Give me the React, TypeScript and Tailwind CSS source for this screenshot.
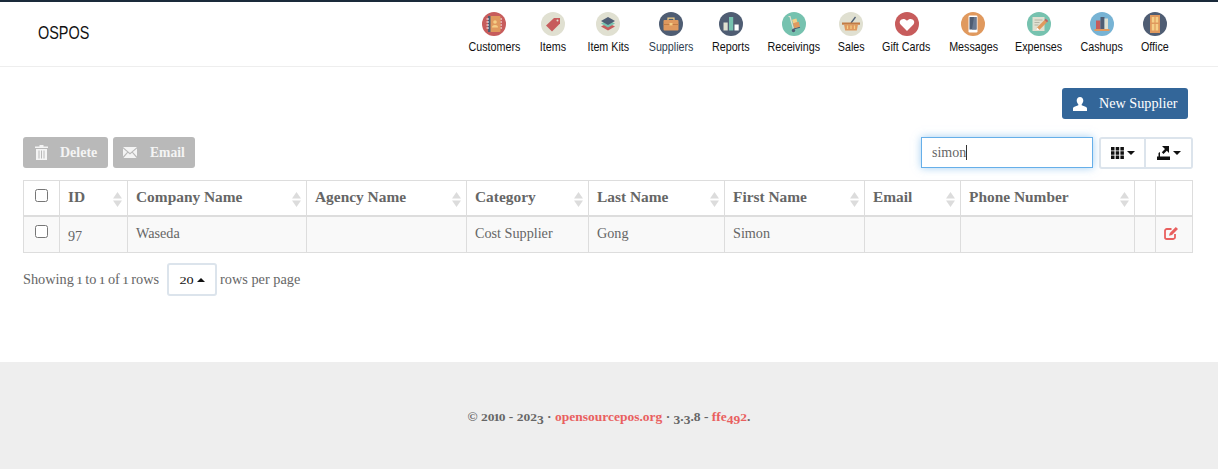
const serif = "font-['Liberation_Serif',Georgia,serif]";

// the reference font has old-style figures, Liberation does not
function Old({ children }: { children: string }) {
  return (
    <>
      {children.split("").map((ch, i) => {
        if (ch === "1") return <span key={i} className="inline-block mx-[-0.1em] scale-y-[0.75] origin-[50%_80%] leading-none">{ch}</span>;
        if ("02".includes(ch)) return <span key={i} className="inline-block scale-y-[0.75] origin-[50%_80%] leading-none">{ch}</span>;
        if ("34579".includes(ch)) return <span key={i} className="inline-block translate-y-[0.2em] leading-none">{ch}</span>;
        return <span key={i}>{ch}</span>;
      })}
    </>
  );
}

function Disc({ bg, children }: { bg: string; children: React.ReactNode }) {
  return (
    <svg width="24" height="24" viewBox="0 0 24 24" className="block">
      <circle cx="12" cy="12" r="12" fill={bg} />
      {children}
    </svg>
  );
}

const navItems: { label: string; w: number; icon: React.ReactNode; muted?: boolean }[] = [
  {
    label: "Customers",
    w: 52,
    icon: (
      <Disc bg="#c75c5c">
        <rect x="6" y="4" width="12.5" height="16" rx="1" fill="#e0995e" />
        <rect x="6" y="4" width="2.5" height="16" fill="#4f5d73" />
        <circle cx="13" cy="10" r="1.8" fill="#f5cf87" />
        <path d="M10 15.500c0-3.200 6-3.200 6 0z" fill="#f5cf87" />
        <path d="M18.500 7h1.500M18.500 10h1.500M18.500 13h1.500M18.500 16h1.500M4.500 7h2.500M4.500 10h2.500M4.500 13h2.500M4.500 16h2.500" stroke="#fff" strokeWidth="1" />
      </Disc>
    ),
  },
  {
    label: "Items",
    w: 27,
    icon: (
      <Disc bg="#e0e0d1">
        <path d="M5 13.500 13 6h6v5.500l-8 8z" fill="#c75c5c" />
        <circle cx="16.500" cy="8.500" r="1" fill="#e0e0d1" />
      </Disc>
    ),
  },
  {
    label: "Item Kits",
    w: 43,
    icon: (
      <Disc bg="#e0e0d1">
        <path d="M5 14.500 12 11l7 3.500-7 4z" fill="#c75c5c" />
        <path d="M5 11.500 12 8l7 3.500-7 4z" fill="#76c2af" />
        <path d="M5 9 12 5l7 4-7 4z" fill="#4f5d73" />
      </Disc>
    ),
  },
  {
    label: "Suppliers",
    w: 44,
    muted: true,
    icon: (
      <Disc bg="#4f5d73">
        <path d="M9 8V6.200h6V8" fill="none" stroke="#f5cf87" strokeWidth="1.200" />
        <rect x="4.500" y="8" width="15" height="10.500" rx="1" fill="#e0995e" />
        <path d="M4.500 12.500h15" stroke="#c27c45" strokeWidth="1" />
        <rect x="10.500" y="11" width="3" height="2.400" fill="#f5cf87" />
      </Disc>
    ),
  },
  {
    label: "Reports",
    w: 36,
    icon: (
      <Disc bg="#4f5d73">
        <rect x="4.500" y="10.500" width="4.200" height="8" fill="#e0e0d1" />
        <rect x="10" y="5" width="4.200" height="13.500" fill="#76c2af" />
        <rect x="15.500" y="12.500" width="4.200" height="6" fill="#fff" />
      </Disc>
    ),
  },
  {
    label: "Receivings",
    w: 50,
    icon: (
      <Disc bg="#76c2af">
        <path d="M6.500 4.500h1.500l3.500 12.500" fill="none" stroke="#e0e0d1" strokeWidth="1.200" />
        <path d="M11.500 17 18 15.200" stroke="#4f5d73" strokeWidth="1.200" />
        <rect x="10.500" y="7" width="4.500" height="4" transform="rotate(-15 12.700 9)" fill="#f5cf87" />
        <rect x="11.500" y="10.500" width="6" height="5" transform="rotate(-15 14.500 13)" fill="#e0995e" />
        <circle cx="11.500" cy="18.500" r="1.700" fill="#4f5d73" />
      </Disc>
    ),
  },
  {
    label: "Sales",
    w: 25,
    icon: (
      <Disc bg="#e0e0d1">
        <path d="M12 11 16.500 5" stroke="#4f5d73" strokeWidth="1.300" />
        <path d="M3 10.500h18v2.200H3z" fill="#c27c45" />
        <path d="M5 12.500h14l-1.200 6H6.200z" fill="#e0995e" />
        <path d="M8.500 13.500v3.500M12 13.500v3.500M15.500 13.500v3.500" stroke="#f5cf87" strokeWidth="1.200" />
      </Disc>
    ),
  },
  {
    label: "Gift Cards",
    w: 47,
    icon: (
      <Disc bg="#c75c5c">
        <path d="M12 19 5.600 12.400c-3-3.600 2.600-7.800 6.400-3.600 3.800-4.200 9.400 0 6.400 3.600z" fill="#fff" />
      </Disc>
    ),
  },
  {
    label: "Messages",
    w: 47,
    icon: (
      <Disc bg="#e0995e">
        <rect x="7.500" y="3.500" width="9" height="17" rx="1.200" fill="#fff" />
        <rect x="8.500" y="5" width="7" height="12.500" fill="#4f5d73" />
        <path d="M13 5h2.500v12.500H11z" fill="#6b7a91" />
      </Disc>
    ),
  },
  {
    label: "Expenses",
    w: 45,
    icon: (
      <Disc bg="#76c2af">
        <rect x="5.500" y="5" width="12" height="14" fill="#e0e0d1" />
        <path d="M7.500 8h8M7.500 10.500h5M7.500 13h4" stroke="#a9a99a" strokeWidth="0.800" />
        <path d="M10 15.500 17.500 8l2.500 2.200-7.500 7.500-3.500.8z" fill="#e0995e" />
        <path d="M17.500 8l1.200-1.200 2.500 2.200-1.200 1.200z" fill="#c75c5c" />
        <path d="M10 15.500l2.500 2.200-3.500.8z" fill="#fff" />
      </Disc>
    ),
  },
  {
    label: "Cashups",
    w: 41,
    icon: (
      <Disc bg="#77b3d4">
        <rect x="6" y="8.500" width="4.500" height="8.500" fill="#c75c5c" />
        <rect x="10.500" y="5" width="4" height="12" fill="#4f5d73" />
        <rect x="14.500" y="6.500" width="3.500" height="10.500" fill="#e0e0d1" />
        <rect x="4.500" y="17" width="15" height="2" fill="#e0995e" />
      </Disc>
    ),
  },
  {
    label: "Office",
    w: 26,
    icon: (
      <Disc bg="#4f5d73">
        <rect x="7" y="3" width="10" height="18" fill="#e0995e" />
        <rect x="8.800" y="5" width="2.600" height="5.500" fill="#f5cf87" />
        <rect x="12.600" y="5" width="2.600" height="5.500" fill="#f5cf87" />
        <rect x="8.800" y="12" width="2.600" height="6.500" fill="#f5cf87" />
        <rect x="12.600" y="12" width="2.600" height="6.500" fill="#f5cf87" />
      </Disc>
    ),
  },
];

function SortArrows() {
  return (
    <svg width="9" height="15" viewBox="0 0 9 15" className="shrink-0 mt-[2px]">
      <path d="M4.500 0 9 6.500H0zM4.500 15 0 8.500h9z" fill="#dcdcdc" />
    </svg>
  );
}

const columns = [
  { label: "ID", w: "w-[68px]" },
  { label: "Company Name", w: "w-[179px]" },
  { label: "Agency Name", w: "w-[160px]" },
  { label: "Category", w: "w-[122px]" },
  { label: "Last Name", w: "w-[136px]" },
  { label: "First Name", w: "w-[140px]" },
  { label: "Email", w: "w-[96px]" },
  { label: "Phone Number", w: "w-[174px]" },
];

const row = ["97", "Waseda", "", "Cost Supplier", "Gong", "Simon", "", ""];

export default function App() {
  return (
    <div className={`${serif} w-[1218px] h-[469px] bg-white text-[#666] overflow-hidden flex flex-col`}>
      <header className="h-[67px] border-t-2 border-t-[#1a2a3a] border-b border-b-[#eee] flex shrink-0">
        <div className="w-[468px] pl-[38px] pt-[19px] font-['Liberation_Sans',sans-serif] text-[19px] leading-[24px] text-[#111]">
          <span className="inline-block scale-x-[0.76] origin-left">OSPOS</span>
        </div>
        <nav className="flex gap-[19.73px] pt-[10px] font-['Liberation_Sans',sans-serif] text-[13px] leading-[16px]">
          {navItems.map((n) => (
            <a key={n.label} className={`flex flex-col items-center gap-[3px] ${n.muted ? "text-[#2f3f52]" : "text-[#111]"}`} style={{ width: n.w }}>
              {n.icon}
              <span className="whitespace-nowrap inline-block scale-x-[0.825]">{n.label}</span>
            </a>
          ))}
        </nav>
      </header>

      <main className="h-[295px] shrink-0 px-[23px] relative">
        <div className="flex justify-end pt-[21px] pr-[7px]">
          <button className="h-[31px] w-[126px] rounded-[3px] bg-[#336699] text-white text-[14.2px] flex items-center pl-[11px]">
            <svg width="14" height="14" viewBox="0 0 14 14" fill="#fff"><path d="M7 0c2 0 3.300 1.500 3.300 3.600 0 1.500-.7 2.900-1.600 3.600v1l3.800 1.600c.9.4 1.500 1 1.500 1.800V14H0v-2.400c0-.8.6-1.400 1.500-1.800l3.800-1.600v-1C4.400 6.500 3.700 5.100 3.700 3.600 3.700 1.500 5 0 7 0z" /></svg>
            <span className="ml-[12px] whitespace-nowrap">New Supplier</span>
          </button>
        </div>

        <div className="flex items-start justify-between mt-[18px] pr-[2px]">
          <div className="flex gap-[5px]">
            <button className="h-[31px] w-[85px] rounded-[3px] bg-[#b9b9b9] text-[#f4f4f4] text-[14px] flex items-center pl-[12px]">
              <svg width="13" height="15" viewBox="0 0 13 15" fill="#f4f4f4"><path d="M4.500 0h4v1.500H13V3H0V1.500h4.500zM1 4h11v11H1zM3.500 5.500v8h1v-8zM6 5.500v8h1v-8zM8.500 5.500v8h1v-8z" fillRule="evenodd" /></svg>
              <span className="ml-[12px] font-bold">Delete</span>
            </button>
            <button className="h-[31px] w-[82px] rounded-[3px] bg-[#b9b9b9] text-[#f4f4f4] text-[13.6px] flex items-center pl-[10px]">
              <svg width="14" height="11" viewBox="0 0 14 11" fill="#f4f4f4"><path d="M0 0h14L7 6zM0 1.500 4.200 5 0 9.500zM14 1.500 9.800 5 14 9.500zM4.900 5.700 7 7.500l2.100-1.800L13.500 11H.5z" /></svg>
              <span className="ml-[13px] mt-[1px] font-bold">Email</span>
            </button>
          </div>
          <div className="flex">
            <div className="w-[172px] h-[31px] border border-[#66afe9] shadow-[0_0_8px_rgba(102,175,233,0.6)] flex items-center pl-[10px] text-[14px] text-[#666] bg-white">
              simon<span className="inline-block w-px h-[15px] bg-[#333]" />
            </div>
            <div className="ml-[6px] flex">
              <button className="w-[47px] h-[32px] border-2 border-[#dce4ec] rounded-l-[3px] flex items-center justify-center gap-[3px] bg-white">
                <svg width="13" height="12" viewBox="0 0 13 12" fill="#111"><path d="M0 0h3.500v3.500H0zM4.700 0h3.500v3.500H4.700zM9.400 0h3.500v3.500H9.400zM0 4.300h3.500v3.500H0zM4.700 4.300h3.500v3.500H4.700zM9.400 4.300h3.500v3.500H9.400zM0 8.600h3.500V12H0zM4.700 8.600h3.500V12H4.700zM9.400 8.600h3.500V12H9.400z" /></svg>
                <svg width="8" height="4" viewBox="0 0 8 4" fill="#111"><path d="M0 0h8L4 4z" /></svg>
              </button>
              <button className="w-[47px] h-[32px] border-2 border-l-0 border-[#dce4ec] rounded-r-[3px] flex items-center justify-center gap-[3px] bg-white">
                <svg width="13" height="14" viewBox="0 0 13 14" fill="#111"><path d="M5 0h7v7L9.800 4.800 6.500 8 4.800 6.300 8 3zM1.500 7 3 6v4.500h10V14H0v-3.500h1.500z" /></svg>
                <svg width="8" height="4" viewBox="0 0 8 4" fill="#111"><path d="M0 0h8L4 4z" /></svg>
              </button>
            </div>
          </div>
        </div>

        <div className="mt-[11px] w-[1170px] border border-[#ddd] text-[14.2px]">
          <div className="flex h-[36px] border-b-2 border-b-[#ddd] font-bold text-[15.4px]">
            <div className="w-[36px] border-r border-[#ddd] flex justify-center pt-[8px]">
              <input type="checkbox" className="w-[13px] h-[13px]" readOnly />
            </div>
            {columns.map((c) => (
              <div key={c.label} className={`${c.w} border-r border-[#ddd] flex items-center justify-between pl-[8px] pr-[5px]`}>
                <span className="whitespace-nowrap pb-[2px]">{c.label}</span>
                <SortArrows />
              </div>
            ))}
            <div className="w-[21px] border-r border-[#ddd]" />
            <div className="flex-1" />
          </div>
          <div className="flex h-[35px] bg-[#f9f9f9]">
            <div className="w-[36px] border-r border-[#ddd] flex justify-center pt-[8px]">
              <input type="checkbox" className="w-[13px] h-[13px]" readOnly />
            </div>
            {columns.map((c, i) => (
              <div key={c.label} className={`${c.w} border-r border-[#ddd] flex items-center pl-[8px] pb-[2px]`}>
                {i === 0 ? <Old>{row[i]}</Old> : row[i]}
              </div>
            ))}
            <div className="w-[21px] border-r border-[#ddd]" />
            <div className="flex-1 flex items-center justify-center pr-[6px] pb-[2px]">
              <svg width="14" height="13" viewBox="0 0 14 13" fill="none" stroke="#e9605f" strokeWidth="1.800"><path d="M7.500 2H2.800A1.800 1.800 0 0 0 1 3.800v6.400A1.800 1.800 0 0 0 2.800 12h6.400a1.800 1.800 0 0 0 1.800-1.800V7" /><path d="M5 8.800 5.800 6l6-6L14 2 8 8z" fill="#e9605f" stroke="none" /></svg>
            </div>
          </div>
        </div>

        <div className="mt-[10px] flex items-center text-[14.3px]">
          <span>Showing <Old>1</Old> to <Old>1</Old> of <Old>1</Old> rows</span>
          <button className="ml-[8px] w-[50px] h-[33px] border-2 border-[#dce4ec] rounded-[3px] flex items-center justify-center gap-[3px] text-[#111] bg-white">
            <span><Old>20</Old></span>
            <svg width="8" height="4" viewBox="0 0 8 4" fill="#111"><path d="M0 4h8L4 0z" /></svg>
          </button>
          <span className="ml-[3px]">rows per page</span>
        </div>
      </main>

      <footer className="flex-1 bg-[#eee] flex items-center justify-center text-[13.5px] font-bold text-[#666] pt-[4px]">
        <span>
          © <Old>2010</Old> - <Old>2023</Old> · <span className="text-[#e9605f]">opensourcepos.org</span> · <Old>3.3.8</Old> - <span className="text-[#e9605f]">ffe<Old>492</Old></span>.
        </span>
      </footer>
    </div>
  );
}
